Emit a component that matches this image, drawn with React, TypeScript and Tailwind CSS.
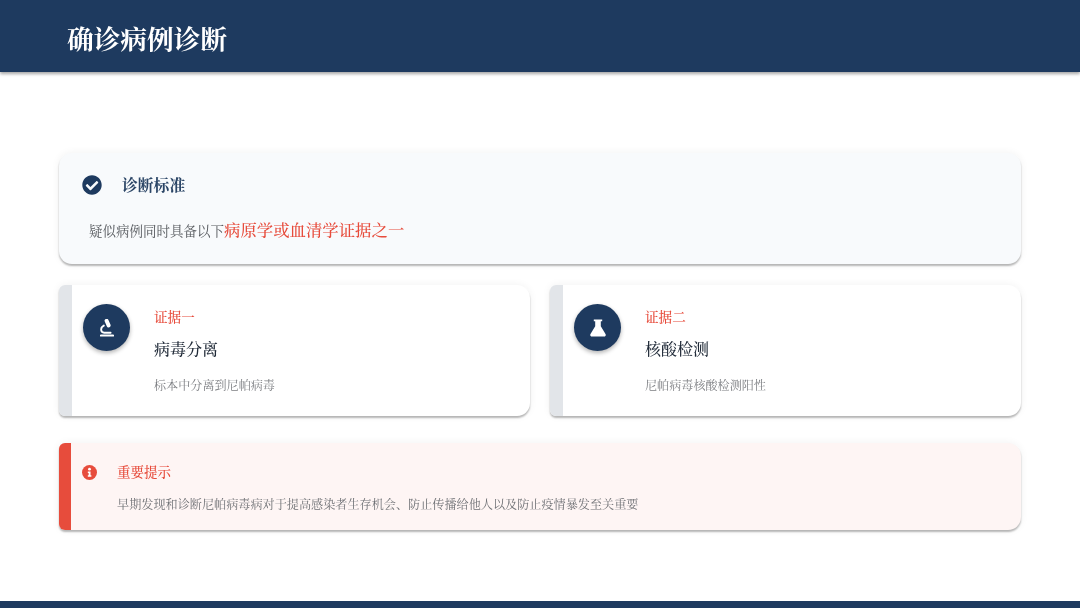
import { FaCheckCircle } from "react-icons/fa";
import type { ReactNode } from "react";

const cardShadow = "shadow-[0_2px_2px_rgba(0,0,0,0.28),0_0_8px_rgba(0,0,0,0.06)]";

function MicroscopeIcon() {
  return (
    <svg viewBox="0 0 14 18" className="h-[18px] w-[14px]" fill="none" stroke="currentColor">
      {/* eyepiece tube */}
      <path d="M6.6 1.8 L8.6 6.4" strokeWidth="4" strokeLinecap="round" />
      {/* arm */}
      <path d="M3.8 6.6 C0.2 8.4 0.2 13.4 4.2 13.7 H10.6" strokeWidth="1.9" strokeLinecap="round" />
      {/* base */}
      <path d="M0.8 16.6 H13.2" strokeWidth="2" strokeLinecap="round" />
    </svg>
  );
}

function FlaskIcon() {
  return (
    <svg viewBox="0 0 16 18" className="h-[18px] w-[16px]" fill="currentColor">
      <path d="M3.8 0.4 H12.2 V2.2 H10.8 V7.2 L15.5 15 A1.7 1.7 0 0 1 14 17.6 H2 A1.7 1.7 0 0 1 0.5 15 L5.2 7.2 V2.2 H3.8 Z" />
    </svg>
  );
}

function InfoIcon() {
  return (
    <svg viewBox="0 0 16 16" className="ml-[11px] mt-[22px] h-[15px] w-[15px]">
      <circle cx="8" cy="8" r="8" fill="#e74c3c" />
      <circle cx="8" cy="4.4" r="1.5" fill="#ffffff" />
      <path d="M6.2 6.8 H9.1 V11 H10 V12.6 H6.2 V11 H7.1 V8.4 H6.2 Z" fill="#ffffff" />
    </svg>
  );
}

function EvidenceCard({ icon, label, title, desc }: { icon: ReactNode; label: string; title: string; desc: string }) {
  return (
    <div className={`flex h-[131px] flex-1 overflow-hidden rounded-tl-[6px] rounded-bl-[6px] rounded-r-[13px] bg-white ${cardShadow}`}>
      <div className="w-[13px] bg-[#e2e5e9]" />
      <div className="ml-[11px] mt-[19px] flex h-[47px] w-[47px] items-center justify-center rounded-full bg-[#1e3a5f] text-white shadow-[0_2px_4px_rgba(0,0,0,0.3)]">
        {icon}
      </div>
      <div className="ml-[24px] flex flex-col pt-[22px]">
        <div className="text-[13.6px] font-medium leading-[18px] text-[#e74c3c]">{label}</div>
        <div className="mt-[12px] text-[16px] font-medium leading-[24px] text-[#1f2937]">{title}</div>
        <div className="mt-[15px] text-[12.1px] leading-[18px] text-[#7d7f83]">{desc}</div>
      </div>
    </div>
  );
}

export default function App() {
  return (
    <div className="flex h-[608px] w-[1080px] flex-col overflow-hidden bg-white font-['Noto_Serif_CJK_SC','Noto_Sans_CJK_SC','Liberation_Sans',sans-serif]">
      {/* Header */}
      <header className="flex h-[72px] items-center bg-[#1e3a5f] pl-[66.5px] pt-[4px] shadow-[0_2px_3px_rgba(0,0,0,0.35)]">
        <h1 className="text-[26.7px] font-bold leading-none text-white will-change-transform">确诊病例诊断</h1>
      </header>

      <main className="flex flex-1 flex-col px-[59px] pt-[81px] will-change-transform">
        {/* Diagnostic criteria */}
        <section className={`h-[111px] rounded-[13px] bg-[#f8fafc] pl-[23px] pt-[22px] ${cardShadow}`}>
          <div className="flex h-[20px] items-center">
            <FaCheckCircle className="h-[20px] w-[20px] text-[#1e3a5f]" />
            <span className="ml-[20px] text-[15.8px] font-bold leading-[22px] text-[#2b4566]">诊断标准</span>
          </div>
          <p className="ml-[7px] mt-[22px] flex items-baseline leading-[24px]">
            <span className="text-[13.5px] text-[#55585d]">疑似病例同时具备以下</span>
            <span className="text-[16.4px] font-medium text-[#e74c3c]">病原学或血清学证据之一</span>
          </p>
        </section>

        {/* Evidence */}
        <div className="mt-[21px] flex gap-[20px]">
          <EvidenceCard icon={<MicroscopeIcon />} label="证据一" title="病毒分离" desc="标本中分离到尼帕病毒" />
          <EvidenceCard icon={<FlaskIcon />} label="证据二" title="核酸检测" desc="尼帕病毒核酸检测阳性" />
        </div>

        {/* Notice */}
        <section className={`mt-[27px] flex h-[87px] overflow-hidden rounded-l-[6px] rounded-r-[13px] bg-[#fef5f4] ${cardShadow}`}>
          <div className="w-[12px] bg-[#e74c3c]" />
          <InfoIcon />
          <div className="ml-[20px] pt-[18px]">
            <div className="text-[13.5px] font-medium leading-[20px] text-[#e74c3c]">重要提示</div>
            <p className="mt-[13px] text-[12.14px] leading-[20px] text-[#6f7175]">
              早期发现和诊断尼帕病毒病对于提高感染者生存机会、防止传播给他人以及防止疫情暴发至关重要
            </p>
          </div>
        </section>
      </main>

      <footer className="h-[7px] bg-[#1e3a5f]" />
    </div>
  );
}
